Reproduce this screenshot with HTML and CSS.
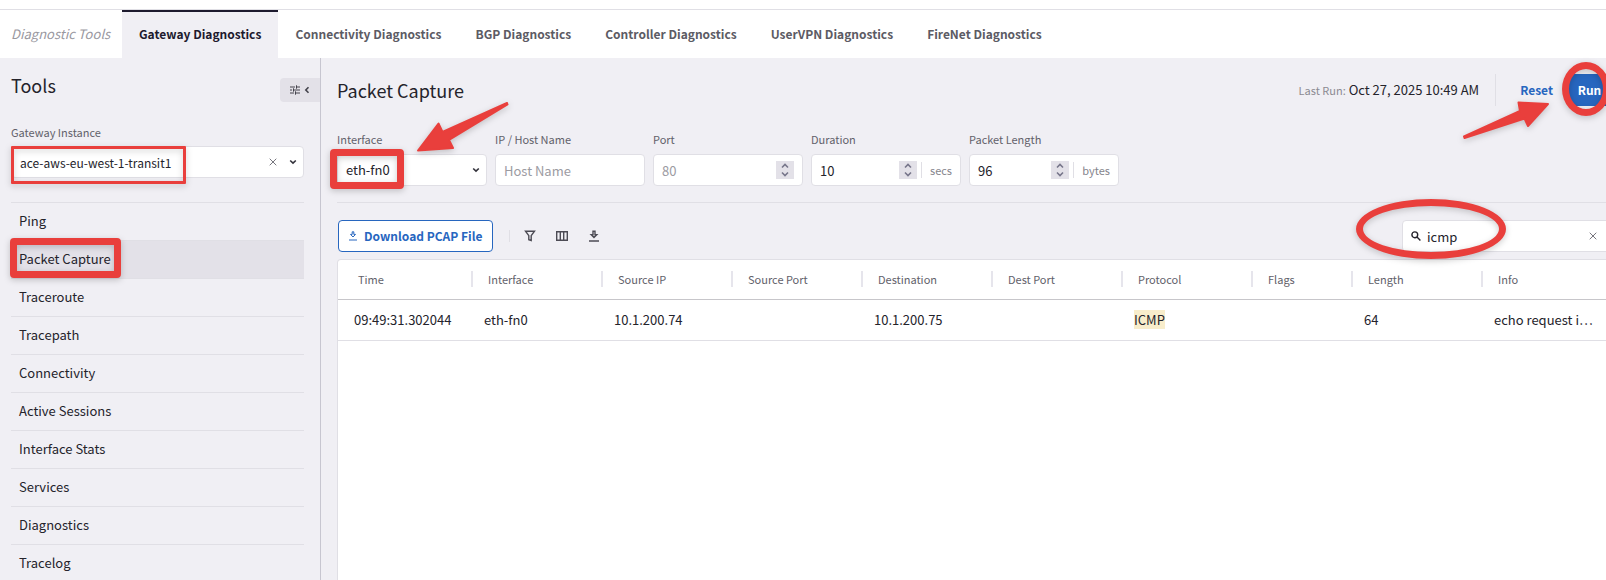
FILE: index.html
```html
<!DOCTYPE html>
<html lang="en">
<head>
<meta charset="utf-8">
<title>Gateway Diagnostics - Packet Capture</title>
<link rel="stylesheet" href="styles.css">
</head>
<body>
<nav class="tabs" aria-label="Diagnostic Tools">
  <span class="tabs-title">Diagnostic Tools</span>
  <a class="tab active" href="#gateway">Gateway Diagnostics</a>
  <a class="tab" href="#connectivity">Connectivity Diagnostics</a>
  <a class="tab" href="#bgp">BGP Diagnostics</a>
  <a class="tab" href="#controller">Controller Diagnostics</a>
  <a class="tab" href="#uservpn">UserVPN Diagnostics</a>
  <a class="tab" href="#firenet">FireNet Diagnostics</a>
</nav>
<div class="layout">
  <aside class="sidebar">
    <div class="side-head">
      <h2 class="title">Tools</h2>
      <button class="collapse" type="button" aria-label="Collapse tools">
        <svg width="10" height="10" viewBox="0 0 10 10"><path d="M0 2h5M7 2h3M6.500 .3v3.400M0 5h2M4 5h6M3.500 3.300v3.400M0 8h4M6 8h4M5.500 6.300v3.400"/></svg>
        <svg class="back" width="6" height="8" viewBox="0 0 6 8"><path d="M4.500 1.200L1.800 4L4.500 6.800"/></svg>
      </button>
    </div>
    <label class="label" for="gateway">Gateway Instance</label>
    <div class="box gateway">
      <input class="input" id="gateway" value="ace-aws-eu-west-1-transit1">
      <button class="clear" type="button" aria-label="Clear gateway"><svg width="8" height="8" viewBox="0 0 8 8"><path d="M.7.7l6.600 6.600M7.300.7L.7 7.300"/></svg></button>
      <svg class="chevron" width="8" height="6" viewBox="0 0 8 6"><path d="M1.200 1.500L4 4.200L6.800 1.500"/></svg>
      <span class="mark mark-gateway"></span>
    </div>
    <nav class="tools" aria-label="Tools">
      <a href="#ping">Ping</a>
      <a href="#capture" class="selected">Packet Capture<span class="mark mark-tool"></span></a>
      <a href="#traceroute">Traceroute</a>
      <a href="#tracepath">Tracepath</a>
      <a href="#conn">Connectivity</a>
      <a href="#sessions">Active Sessions</a>
      <a href="#stats">Interface Stats</a>
      <a href="#services">Services</a>
      <a href="#diagnostics">Diagnostics</a>
      <a href="#tracelog">Tracelog</a>
    </nav>
  </aside>
  <main class="main">
    <header class="head">
      <h1 class="title">Packet Capture</h1>
      <p class="last"><span>Last Run:</span> Oct 27, 2025 10:49 AM</p>
      <div class="actions">
        <button class="reset" type="button">Reset</button>
        <button class="run" type="button">Run</button>
        <span class="mark mark-run"></span>
        <svg class="arrow arrow-run" width="88" height="42" viewBox="0 0 88 42"><path d="M2 36.500L58 11L56.500 2.500L86 4L66 26L62.500 18.500L2.500 38Z"/></svg>
      </div>
    </header>
    <form class="fields">
      <div class="field">
        <label class="label" for="iface">Interface</label>
        <div class="box">
          <select class="input" id="iface"><option>eth-fn0</option></select>
          <svg class="chevron" width="8" height="6" viewBox="0 0 8 6"><path d="M1.200 1.500L4 4.200L6.800 1.500"/></svg>
          <span class="mark mark-iface"></span>
          <svg class="arrow arrow-iface" width="96" height="54" viewBox="0 0 96 54"><path d="M3 50.500L23.500 23.500L27.500 32L92 3L92.500 4.500L34 40L38 48Z"/></svg>
        </div>
      </div>
      <div class="field">
        <label class="label" for="host">IP / Host Name</label>
        <div class="box"><input class="input" id="host" placeholder="Host Name"></div>
      </div>
      <div class="field">
        <label class="label" for="port">Port</label>
        <div class="box"><input class="input" id="port" inputmode="numeric" placeholder="80">
          <button class="step" type="button" aria-label="Step port"><svg width="8" height="14" viewBox="0 0 8 14"><path d="M1 4.500L4 1.500L7 4.500M1 9.500L4 12.500L7 9.500"/></svg></button></div>
      </div>
      <div class="field">
        <label class="label" for="duration">Duration</label>
        <div class="box"><input class="input" id="duration" inputmode="numeric" value="10">
          <button class="step" type="button" aria-label="Step duration"><svg width="8" height="14" viewBox="0 0 8 14"><path d="M1 4.500L4 1.500L7 4.500M1 9.500L4 12.500L7 9.500"/></svg></button><span class="unit">secs</span></div>
      </div>
      <div class="field">
        <label class="label" for="length">Packet Length</label>
        <div class="box"><input class="input" id="length" inputmode="numeric" value="96">
          <button class="step" type="button" aria-label="Step length"><svg width="8" height="14" viewBox="0 0 8 14"><path d="M1 4.500L4 1.500L7 4.500M1 9.500L4 12.500L7 9.500"/></svg></button><span class="unit">bytes</span></div>
      </div>
    </form>
    <div class="toolbar">
      <button class="download" type="button">
        <svg width="8" height="10" viewBox="0 0 8 10"><path d="M3.200 .8h1.600v2.600h1.700L4 6L1.500 3.400h1.700zM0 9h8"/></svg>
        Download PCAP File
      </button>
      <span class="sep"></span>
      <button class="icon" type="button" aria-label="Filter"><svg width="12" height="12" viewBox="0 0 12 12"><path d="M1.500 1.200h9L7.200 5.700v4.800L4.800 9.700v-4z"/></svg></button>
      <button class="icon" type="button" aria-label="Columns"><svg width="12" height="12" viewBox="0 0 12 12"><path d="M.7 1.700h10.600v8.600H.7zM4.300 1.700v8.600M7.700 1.700v8.600"/></svg></button>
      <button class="icon" type="button" aria-label="Export"><svg width="12" height="12" viewBox="0 0 12 12"><path d="M5 1.200h2v3.500h1.800L6 7.500L3.200 4.700H5zM1 11h10"/></svg></button>
      <div class="box search">
        <svg class="glass" width="10" height="10" viewBox="0 0 10 10"><circle cx="3.800" cy="3.800" r="2.900"/><path d="M6 6l3.400 3.400"/></svg>
        <input class="input" aria-label="Search" value="icmp">
        <button class="clear" type="button" aria-label="Clear search"><svg width="8" height="8" viewBox="0 0 8 8"><path d="M.7.7l6.600 6.600M7.300.7L.7 7.300"/></svg></button>
        <span class="mark mark-search"></span>
      </div>
    </div>
    <div class="panel">
      <table class="grid">
        <colgroup><col class="c-time"><col class="c-std"><col class="c-std"><col class="c-std"><col class="c-std"><col class="c-std"><col class="c-std"><col class="c-flags"><col class="c-std"><col></colgroup>
        <thead><tr><th>Time</th><th>Interface</th><th>Source IP</th><th>Source Port</th><th>Destination</th><th>Dest Port</th><th>Protocol</th><th>Flags</th><th>Length</th><th>Info</th></tr></thead>
        <tbody><tr><td>09:49:31.302044</td><td>eth-fn0</td><td>10.1.200.74</td><td></td><td>10.1.200.75</td><td></td><td><mark>ICMP</mark></td><td></td><td>64</td><td>echo request i…</td></tr></tbody>
      </table>
    </div>
  </main>
</div>
</body>
</html>
```
FILE: styles.css
```css
* { box-sizing: border-box; }
:root {
  --bg: #f0eff4;
  --line: #e0dfe5;
  --text: #24232b;
  --muted: #62616a;
  --blue: #2766bf;
  --red: #e93f3c;
}
body {
  margin: 0;
  height: 100vh;
  overflow: hidden;
  display: flex;
  flex-direction: column;
  padding-top: 9px;
  background: #fff;
  color: var(--text);
  font: 13px/20px "Noto Sans CJK SC", "Noto Sans", sans-serif;
}
button, input, select { font: inherit; color: inherit; }
button { border: 0; background: none; padding: 0; display: flex; align-items: center; justify-content: center; }
a { color: inherit; text-decoration: none; }
svg { flex: none; fill: none; stroke: currentColor; }

.tabs { display: flex; height: 49px; flex: none; border-top: 1px solid var(--line); line-height: 48px; white-space: nowrap; }
.tabs-title { padding: 0 0 0 11px; width: 122px; color: #99989f; font-style: italic; }
.tab { padding: 0 17px; font-size: 12px; font-weight: 700; color: #5c5b64; }
.tab.active { background: var(--bg); color: #1d1a2e; box-shadow: inset 0 2px #1d1a2e; }

.layout { display: flex; flex: 1; min-height: 0; background: var(--bg); }
.sidebar { width: 321px; flex: none; border-right: 1px solid #c7c6d0; padding: 18px 16px 0 11px; }
.side-head { display: flex; justify-content: space-between; height: 46px; margin-right: -16px; }
.title { margin: 0; font-size: 18px; line-height: 16px; font-weight: 400; }
.side-head .title { line-height: 18px; }
.collapse { width: 40px; height: 24px; margin-top: 2px; gap: 4px; background: #e3e1e8; border-radius: 4px 0 0 4px; color: #44434c; }
.back { stroke-width: 1.600; }
.label { display: block; font-size: 11px; line-height: 20px; color: var(--muted); white-space: nowrap; }
.box { position: relative; display: flex; align-items: center; height: 32px; padding: 0 8px; background: #fff; border: 1px solid var(--line); border-radius: 4px; }
.input { flex: 1; width: 0; min-width: 0; height: 100%; padding: 0; border: 0; outline: 0; background: none; appearance: none; }
.input::placeholder { color: #9c9ba2; opacity: 1; }
.clear { color: #77767e; width: 16px; height: 16px; }
.chevron { margin-right: -2px; stroke-width: 1.600; color: #33323b; }
.gateway { margin-top: 4px; }
.gateway .input { font-size: 12px; }
.gateway .clear { margin-right: 8px; }
.tools { margin-top: 24px; border-top: 1px solid var(--line); }
.tools a { display: block; position: relative; height: 38px; padding: 0 8px; line-height: 35px; border-bottom: 1px solid var(--line); }
.tools .selected { background: #e3e1e8; }

.main { flex: 1; min-width: 0; display: flex; flex-direction: column; padding: 16px 0 0 16px; margin-right: -4px; }
.head { display: flex; align-items: center; height: 32px; }
.last { margin: 0 16px 0 auto; }
.last span { font-size: 11px; color: #8b8a92; }
.actions { position: relative; display: flex; gap: 8px; height: 32px; padding-left: 16px; border-left: 1px solid var(--line); font-size: 12px; font-weight: 700; color: var(--blue); }
.reset, .run { padding: 0 8px; }
.run { min-width: 41px; background: var(--blue); color: #fff; border-radius: 4px; }
.fields { display: flex; gap: 8px; margin: 0; padding: 23px 0 16px; border-bottom: 1px solid var(--line); }
.field { width: 150px; }
.field .label { margin-bottom: 5px; }
.step { width: 18px; height: 18px; background: #e3e1e8; color: #77768a; }
.step svg { stroke-width: 1.600; }
.unit { margin-left: 4px; padding-left: 8px; border-left: 1px solid var(--line); line-height: 16px; font-size: 11px; color: #85848c; }

.toolbar { display: flex; align-items: center; padding: 17px 0 7px 1px; }
.download { height: 32px; gap: 7px; padding: 0 10px; border: 1px solid var(--blue); border-radius: 4px; background: #fff; color: var(--blue); font-size: 12px; font-weight: 700; white-space: nowrap; }
.sep { width: 1px; height: 12px; margin: 0 14px 0 16px; background: var(--line); }
.icon { width: 12px; height: 16px; margin-right: 20px; color: #4c4b54; }
.icon svg { stroke-width: 1.400; }
.search { width: 208px; margin-left: auto; }
.glass { margin-right: 6px; stroke-width: 1.400; }

.panel { flex: 1; background: #fff; border: 1px solid var(--line); border-bottom: 0; border-radius: 4px 0 0 0; }
.grid { width: 100%; table-layout: fixed; border-collapse: collapse; }
.c-time { width: 135px; }
.c-std { width: 130px; }
.c-flags { width: 100px; }
.grid th { height: 39px; padding: 0 0 0 15px; border-bottom: 1px solid #c7c6ca; text-align: left; font-size: 11px; font-weight: 400; color: var(--muted); background: linear-gradient(#e6e5ec, #e6e5ec) right center / 2px 16px no-repeat; }
.grid th:last-child { background: none; }
.grid th:first-child { padding-left: 20px; }
.grid td { height: 41px; padding: 0 0 0 11px; border-bottom: 1px solid var(--line); white-space: nowrap; }
.grid td:first-child { padding-left: 16px; }
mark { background: #f8edcb; color: inherit; }

.mark { position: absolute; border: 7px solid var(--red); border-radius: 4px; pointer-events: none; filter: drop-shadow(0 2px 3px #0003); z-index: 2; }
.mark-gateway { border-width: 3px; border-radius: 1px; inset: -1px 117px -7px -1px; }
.mark-tool { left: -1px; top: -3px; width: 111px; height: 40px; }
.mark-iface { left: -8px; top: -6px; width: 74px; height: 40px; }
.mark-run { right: 0; top: -12px; width: 48px; height: 54px; border-radius: 50%; }
.mark-search { left: -47px; top: -22px; width: 150px; height: 60px; border-radius: 50%; }
.arrow { position: absolute; color: var(--red); fill: var(--red); stroke-width: 2; stroke-linejoin: round; filter: drop-shadow(0 2px 3px #0003); z-index: 2; }
.arrow-iface { left: 77px; top: -55px; }
.arrow-run { right: 60px; top: 26px; }
```
